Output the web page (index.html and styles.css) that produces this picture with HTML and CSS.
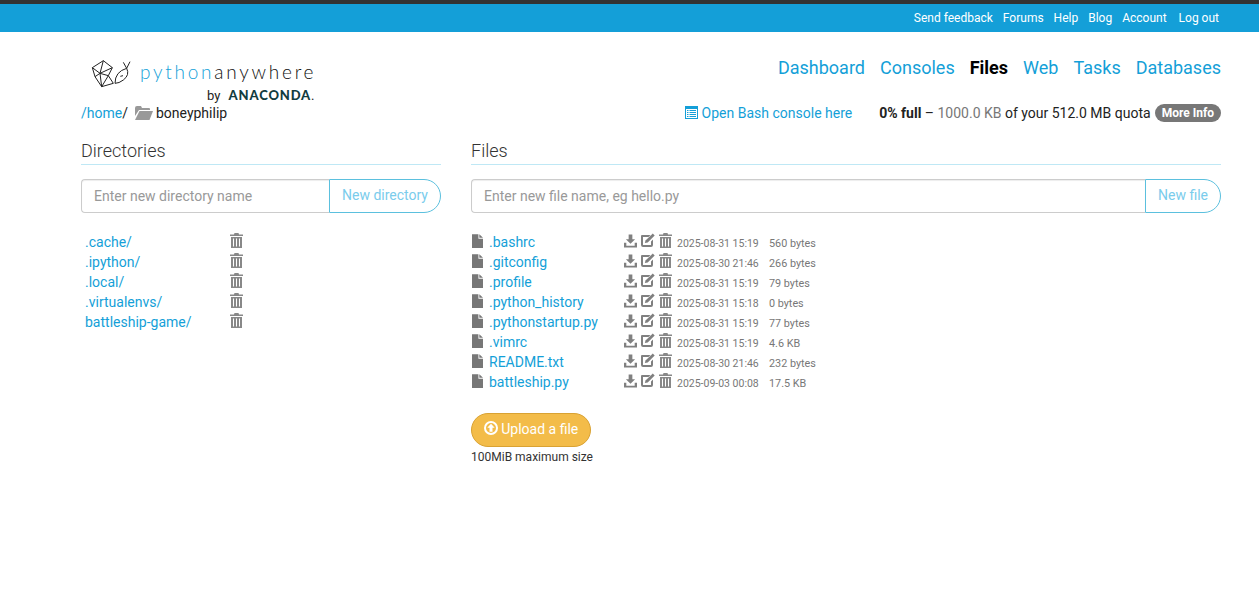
FILE: index.html
```html
<!DOCTYPE html>
<html lang="en">
<head>
    <meta charset="UTF-8">
    <meta name="viewport" content="width=device-width, initial-scale=1.0">
    <title>Files</title>
    <link rel="stylesheet" href="styles.css">
</head>
<body>
    <svg class="sprites" width="0" height="0">
        <symbol id="file" viewBox="0 0 12 15"><path d="M0 0h7v5h5v10H0z"/><path d="M8 0l4 4H8z"/></symbol>
        <symbol id="download" viewBox="0 0 14 14"><path d="M5 0h4v5h3L7 10 2 5h3z"/><path d="M0 9h2.500v3h9V9H14v5H0z"/></symbol>
        <symbol id="edit" viewBox="0 0 15 15"><path d="M2 2h8.500L8.500 4H3v8h8V8.500l2-2V12a2 2 0 0 1-2 2H3a2 2 0 0 1-2-2V3a1 1 0 0 1 1-1z"/><path d="M5.500 7.500L12.800.6l1.900 1.900-7 7-2.800.6z"/></symbol>
        <symbol id="trash" viewBox="0 0 13 15"><path d="M4.500 0h4l.5 1.500h4V3H0V1.500h4z"/><path d="M1 4h11v11H1zm2 1.500v8h1v-8zm3 0v8h1v-8zm3 0v8h1v-8z" fill-rule="evenodd"/></symbol>
        <symbol id="folder" viewBox="0 0 18 14"><path d="M0 2q0-2 2-2h4l1 2h7q1 0 1 1v1H4L0 10z"/><path d="M4.500 5H18l-3.500 9H0z"/></symbol>
        <symbol id="console" viewBox="0 0 13 13"><path d="M0 0h13v13H0zm1 3v9h11V3zm1 1h1.500v1H2zm2.500 0H11v1H4.500zM2 6h1.500v1H2zm2.500 0H11v1H4.500zM2 8h1.500v1H2zm2.500 0H11v1H4.500zM2 10h1.500v1H2zm2.500 0H11v1H4.500z" fill-rule="evenodd"/></symbol>
        <symbol id="upload" viewBox="0 0 14 14"><path d="M7 0a7 7 0 1 0 0 14A7 7 0 0 0 7 0zm0 2a5 5 0 1 1 0 10A5 5 0 0 1 7 2zm0 .8L3.300 6.800h2.200v4h3v-4h2.200z" fill-rule="evenodd"/></symbol>
    </svg>

    <div class="topbar">
        <ul class="toplinks">
            <li><a href="#">Send feedback</a></li>
            <li><a href="#">Forums</a></li>
            <li><a href="#">Help</a></li>
            <li><a href="#">Blog</a></li>
            <li><a href="#">Account</a></li>
            <li class="logout"><a href="#">Log out</a></li>
        </ul>
    </div>

    <div class="container">
        <header class="masthead">
            <div class="logo">
                <svg class="logo-mark" viewBox="0 0 150 120" width="50" height="40">
                    <path d="M22 38L55 17l27 21-12 24 15 23-35 10-20-30zM55 17L45 55 22 38M45 55l37-17M45 55l25 7M45 55L30 65M45 55l5 40M70 62L50 95"/>
                    <path d="M90 85q0-35 35-45 10 20-10 35-13 10-25 10zM125 40l10-20M125 40l-10-18M106 64l8-2"/>
                </svg>
                <div class="logo-text">
                    <div class="logo-name"><span class="logo-python">python</span>anywhere</div>
                    <div class="logo-by">by <b>ANACONDA</b>.</div>
                </div>
            </div>
            <nav class="mainnav">
                <a href="#">Dashboard</a>
                <a href="#">Consoles</a>
                <a href="#" class="active">Files</a>
                <a href="#">Web</a>
                <a href="#">Tasks</a>
                <a href="#">Databases</a>
            </nav>
        </header>

        <div class="pathbar">
            <div class="crumbs">
                <a href="#">/home</a><span>/</span>
                <svg class="icon-folder"><use href="#folder"/></svg>
                <span>boneyphilip</span>
            </div>
            <div class="quota">
                <a href="#" class="bash"><svg class="icon-console"><use href="#console"/></svg> Open Bash console here</a>
                <span class="usage"><b>0% full</b> – <span class="muted">1000.0 KB</span> of your 512.0 MB quota</span>
                <a href="#" class="badge">More Info</a>
            </div>
        </div>

        <div class="columns">
            <section class="col-dirs">
                <h2>Directories</h2>
                <form class="newitem">
                    <input type="text" placeholder="Enter new directory name">
                    <button type="button">New directory</button>
                </form>
                <ul class="dirlist">
                    <li><a href="#">.cache/</a><svg class="icon-trash"><use href="#trash"/></svg></li>
                    <li><a href="#">.ipython/</a><svg class="icon-trash"><use href="#trash"/></svg></li>
                    <li><a href="#">.local/</a><svg class="icon-trash"><use href="#trash"/></svg></li>
                    <li><a href="#">.virtualenvs/</a><svg class="icon-trash"><use href="#trash"/></svg></li>
                    <li><a href="#">battleship-game/</a><svg class="icon-trash"><use href="#trash"/></svg></li>
                </ul>
            </section>

            <section class="col-files">
                <h2>Files</h2>
                <form class="newitem">
                    <input type="text" placeholder="Enter new file name, eg hello.py">
                    <button type="button">New file</button>
                </form>
                <ul class="filelist" id="filelist">
                    <li><svg class="icon-file"><use href="#file"/></svg><a href="#" class="fname">.bashrc</a><span class="acts"><svg class="icon-dl"><use href="#download"/></svg><svg class="icon-edit"><use href="#edit"/></svg><svg class="icon-trash"><use href="#trash"/></svg></span><span class="fdate">2025-08-31 15:19</span><span class="fsize">560 bytes</span></li>
                    <li><svg class="icon-file"><use href="#file"/></svg><a href="#" class="fname">.gitconfig</a><span class="acts"><svg class="icon-dl"><use href="#download"/></svg><svg class="icon-edit"><use href="#edit"/></svg><svg class="icon-trash"><use href="#trash"/></svg></span><span class="fdate">2025-08-30 21:46</span><span class="fsize">266 bytes</span></li>
                    <li><svg class="icon-file"><use href="#file"/></svg><a href="#" class="fname">.profile</a><span class="acts"><svg class="icon-dl"><use href="#download"/></svg><svg class="icon-edit"><use href="#edit"/></svg><svg class="icon-trash"><use href="#trash"/></svg></span><span class="fdate">2025-08-31 15:19</span><span class="fsize">79 bytes</span></li>
                    <li><svg class="icon-file"><use href="#file"/></svg><a href="#" class="fname">.python_history</a><span class="acts"><svg class="icon-dl"><use href="#download"/></svg><svg class="icon-edit"><use href="#edit"/></svg><svg class="icon-trash"><use href="#trash"/></svg></span><span class="fdate">2025-08-31 15:18</span><span class="fsize">0 bytes</span></li>
                    <li><svg class="icon-file"><use href="#file"/></svg><a href="#" class="fname">.pythonstartup.py</a><span class="acts"><svg class="icon-dl"><use href="#download"/></svg><svg class="icon-edit"><use href="#edit"/></svg><svg class="icon-trash"><use href="#trash"/></svg></span><span class="fdate">2025-08-31 15:19</span><span class="fsize">77 bytes</span></li>
                    <li><svg class="icon-file"><use href="#file"/></svg><a href="#" class="fname">.vimrc</a><span class="acts"><svg class="icon-dl"><use href="#download"/></svg><svg class="icon-edit"><use href="#edit"/></svg><svg class="icon-trash"><use href="#trash"/></svg></span><span class="fdate">2025-08-31 15:19</span><span class="fsize">4.6 KB</span></li>
                    <li><svg class="icon-file"><use href="#file"/></svg><a href="#" class="fname">README.txt</a><span class="acts"><svg class="icon-dl"><use href="#download"/></svg><svg class="icon-edit"><use href="#edit"/></svg><svg class="icon-trash"><use href="#trash"/></svg></span><span class="fdate">2025-08-30 21:46</span><span class="fsize">232 bytes</span></li>
                    <li><svg class="icon-file"><use href="#file"/></svg><a href="#" class="fname">battleship.py</a><span class="acts"><svg class="icon-dl"><use href="#download"/></svg><svg class="icon-edit"><use href="#edit"/></svg><svg class="icon-trash"><use href="#trash"/></svg></span><span class="fdate">2025-09-03 00:08</span><span class="fsize">17.5 KB</span></li>
                </ul>
                <button type="button" class="upload"><svg class="icon-upload"><use href="#upload"/></svg> Upload a file</button>
                <p class="maxsize">100MiB maximum size</p>
            </section>
        </div>
    </div>
</body>
</html>
```

FILE: styles.css
```css
* {
    box-sizing: border-box;
    margin: 0;
    padding: 0;
}

body {
    font-family: Roboto, 'Liberation Sans', sans-serif;
    font-size: 14px;
    line-height: 20px;
    background: #fff;
    color: #333;
}

a {
    color: #149fd8;
    text-decoration: none;
}

ul {
    list-style: none;
}

.sprites {
    position: absolute;
}

svg {
    fill: currentColor;
}

.topbar {
    height: 32px;
    background: #149fd8;
    border-top: 4px solid #333;
    padding-right: 40px;
}

.toplinks {
    display: flex;
    justify-content: flex-end;
    gap: 10px;
    font-size: 12px;
    line-height: 28px;
}

.toplinks a {
    color: #fff;
}

.toplinks .logout {
    margin-left: 2px;
}

.container {
    width: 1140px;
    margin-left: 81px;
}

.masthead {
    display: flex;
    justify-content: space-between;
    height: 69px;
}

.logo {
    display: flex;
    padding: 23px 0 0 4px;
}

.logo-mark {
    fill: none;
    stroke: #222;
    stroke-width: 3;
    margin-right: 5px;
}

.logo-text {
    width: 175px;
    margin-top: 3px;
}

.logo-name {
    font-family: Lato, sans-serif;
    font-weight: 300;
    font-size: 19px;
    line-height: 28px;
    letter-spacing: 2.750px;
    color: #111;
    white-space: nowrap;
}

.logo-python {
    color: #149fd8;
}

.logo-by {
    font-size: 13px;
    line-height: 16px;
    margin-top: 1px;
    margin-left: 67px;
    color: #222;
    white-space: nowrap;
}

.logo-by b {
    font-family: Lato, sans-serif;
    font-weight: 900;
    letter-spacing: .85px;
    color: #123c40;
    margin-left: 5px;
}

.mainnav {
    display: flex;
    gap: 15px;
    font-size: 18px;
    line-height: 26px;
    padding-top: 23px;
}

.mainnav .active {
    color: #000;
    font-weight: 700;
}

.pathbar {
    display: flex;
    justify-content: space-between;
    align-items: center;
    height: 24px;
}

.crumbs {
    display: flex;
    align-items: center;
    color: #222;
}

.icon-folder {
    width: 18px;
    height: 14px;
    color: #999;
    margin: 0 3px 0 7px;
}

.quota {
    display: flex;
    align-items: center;
}

.bash {
    margin-right: 27px;
}

.icon-console {
    width: 13px;
    height: 13px;
    vertical-align: -1px;
}

.usage {
    color: #222;
}

.muted {
    color: #777;
}

.badge {
    background: #777;
    color: #fff;
    font-size: 12px;
    font-weight: 700;
    line-height: 16px;
    padding: 1px 7px;
    border-radius: 10px;
    margin-left: 4px;
}

.columns {
    display: grid;
    grid-template-columns: 360px 750px;
    gap: 30px;
    padding-top: 13px;
}

h2 {
    font-size: 18px;
    font-weight: 300;
    line-height: 26px;
    color: #333;
    height: 27px;
    border-bottom: 1px solid #bfe8f5;
    margin-bottom: 14px;
}

.newitem {
    display: flex;
    height: 34px;
}

.newitem input {
    flex: 1;
    min-width: 0;
    border: 1px solid #ccc;
    border-right: none;
    border-radius: 4px 0 0 4px;
    padding: 0 12px;
    font: 14px Roboto, sans-serif;
    color: #333;
    box-shadow: inset 0 1px 1px rgba(0, 0, 0, .075);
    outline: none;
}

.newitem input::placeholder {
    color: #999;
}

.newitem button {
    background: #fff;
    border: 1px solid #5bc0de;
    border-radius: 0 17px 17px 0;
    padding: 0 12px 3px;
    font: 14px Roboto, sans-serif;
    color: #7accec;
}

.dirlist {
    margin-top: 19px;
    padding-left: 4px;
}

.dirlist li {
    height: 20px;
    display: flex;
    align-items: center;
}

.dirlist a {
    width: 145px;
}

.icon-trash {
    width: 13px;
    height: 15px;
    color: #888;
}

.dirlist .icon-trash {
    margin-top: -3px;
}

.filelist {
    margin-top: 19px;
}

.filelist li {
    display: flex;
    align-items: center;
    height: 20px;
}

.icon-file {
    width: 11px;
    height: 14px;
    color: #777;
    margin: -2px 6px 0 1px;
}

.fname {
    width: 135px;
}

.acts {
    display: flex;
    align-items: center;
    width: 53px;
    color: #808080;
    margin-top: -3px;
}

.icon-dl {
    width: 13px;
    height: 14px;
    margin-right: 3px;
}

.icon-edit {
    width: 15px;
    height: 15px;
    margin-right: 4px;
}

.fdate {
    font-size: 10.500px;
    color: #777;
    width: 92px;
    margin-top: 3px;
}

.fsize {
    font-size: 10.800px;
    color: #777;
    margin-top: 3px;
}

.upload {
    display: block;
    margin-top: 21px;
    height: 34px;
    width: 120px;
    background: #f3bc49;
    border: 1px solid #d9a233;
    border-radius: 17px;
    color: #fff;
    font: 14px Roboto, sans-serif;
    padding-bottom: 3px;
}

.icon-upload {
    width: 14px;
    height: 14px;
    vertical-align: -1px;
}

.maxsize {
    font-size: 12px;
    line-height: 16px;
    margin-top: 2px;
    color: #333;
}
```
